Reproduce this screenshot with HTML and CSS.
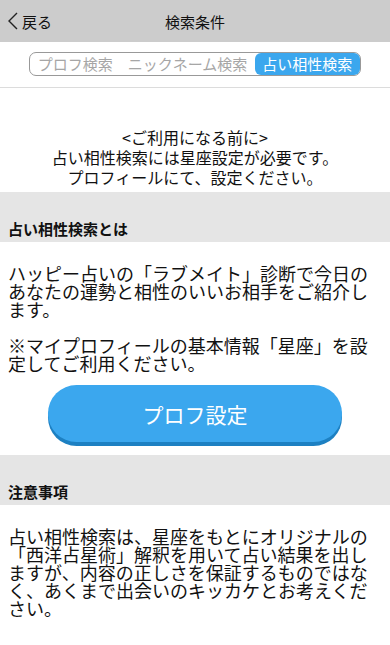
FILE: index.html
```html
<!DOCTYPE html>
<html lang="ja">
<head>
<meta charset="utf-8">
<title>検索条件</title>
<link rel="stylesheet" href="styles.css">
</head>
<body>
<header class="topbar">
  <a class="back" href="#">
    <svg class="chev" width="12" height="18" viewBox="0 0 12 18"><path d="M10 1 L2 9 L10 17" fill="none" stroke="#222" stroke-width="1.4"/></svg>
    <span>戻る</span>
  </a>
  <div class="title">検索条件</div>
</header>
<nav class="tabbar">
  <div class="tabs">
    <span class="tab">プロフ検索</span>
    <span class="tab">ニックネーム検索</span>
    <span class="tab active">占い相性検索</span>
  </div>
</nav>
<section class="notice">
  <p>&lt;ご利用になる前に&gt;<br>占い相性検索には星座設定が必要です。<br>プロフィールにて、設定ください。</p>
</section>
<h2 class="sechead">占い相性検索とは</h2>
<div class="body">
  <p>ハッピー占いの「ラブメイト」診断で今日のあなたの運勢と相性のいいお相手をご紹介します。<br><br>※マイプロフィールの基本情報「星座」を設定してご利用ください。</p>
</div>
<div class="btnwrap"><a class="btn" href="#">プロフ設定</a></div>
<h2 class="sechead">注意事項</h2>
<div class="body">
  <p>占い相性検索は、星座をもとにオリジナルの「西洋占星術」解釈を用いて占い結果を出しますが、内容の正しさを保証するものではなく、あくまで出会いのキッカケとお考えください。</p>
</div>
</body>
</html>
```

FILE: styles.css
```css
* { box-sizing: border-box; }
html, body { margin: 0; padding: 0; }
body {
  font-family: "Noto Sans CJK JP", "Noto Sans", sans-serif;
  color: #111;
  background: #fff;
  width: 390px;
}
p { margin: 0; }
.topbar {
  height: 42px;
  background: #cccccc;
  position: relative;
  display: flex;
  align-items: center;
  justify-content: center;
}
.back {
  position: absolute;
  left: 7px;
  top: 0;
  height: 42px;
  display: flex;
  align-items: center;
  gap: 3px;
  color: #111;
  text-decoration: none;
  font-size: 15px;
}
.chev { display: block; }
.title { font-size: 15px; color: #111; }
.tabbar {
  padding: 10px 0 11px;
  border-bottom: 1px solid #dcdcdc;
  display: flex;
  justify-content: center;
}
.tabs {
  display: flex;
  border: 1px solid #999;
  border-radius: 7px;
  height: 24px;
}
.tab {
  font-size: 15px;
  line-height: 22px;
  padding: 0 7.5px;
  color: #a6a6a6;
  white-space: nowrap;
}
.tab.active {
  background: #3ba7ee;
  color: #fff;
  border-radius: 6px;
}
.notice {
  padding: 39px 8px 5px;
  text-align: center;
  font-size: 16px;
  line-height: 20px;
}
.sechead {
  margin: 0;
  background: #e5e5e5;
  height: 50px;
  padding: 28px 8px 0;
  font-size: 15px;
  line-height: 18px;
  font-weight: bold;
}
.body {
  padding: 22px 8px 0;
  font-size: 18px;
  line-height: 18px;
}
.btnwrap {
  padding: 13px 48px 9px;
}
.btn {
  display: flex;
  align-items: center;
  justify-content: center;
  height: 57px;
  border-radius: 29px;
  background: #3ba7ee;
  box-shadow: 0 4px 0 #1d80c2;
  color: #fff;
  font-size: 21px;
  text-decoration: none;
  margin-bottom: 4px;
}
```
